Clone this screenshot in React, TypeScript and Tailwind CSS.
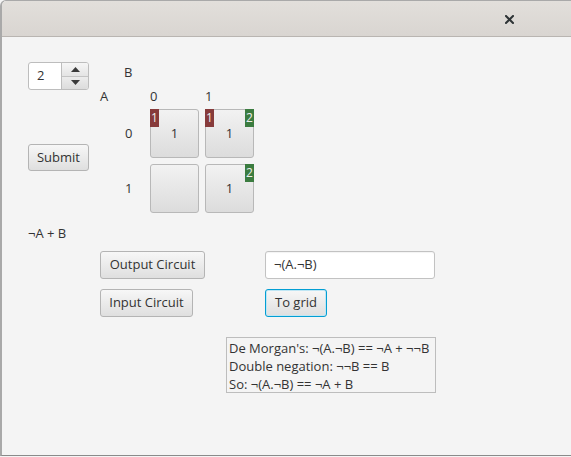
const font = { fontFamily: '"Open Sans", "Noto Sans", sans-serif' };

function Btn({ label, w, focused }: { label: string; w: string; focused?: boolean }) {
  return (
    <div
      className={`${w} flex h-[28px] items-center justify-center rounded-[3px] border bg-gradient-to-b from-[#f7f7f7] to-[#dfdfdf] text-[13px] text-[#333] ${
        focused ? "border-[#039ed3] shadow-[inset_0_0_0_1px_#bfe6f4]" : "border-[#b4b4b4]"
      }`}
    >
      {label}
    </div>
  );
}

function Cell({ value, red, green }: { value?: string; red?: string; green?: string }) {
  return (
    <div className="relative h-[49px] w-[49px] rounded-[3px] border border-[#b8b8b8] bg-gradient-to-b from-[#f2f2f2] to-[#dcdcdc]">
      {red && (
        <span className="absolute -left-px -top-px flex h-[18px] w-[9px] items-center justify-center bg-[#873b3b] text-[12px] leading-none text-[#eee]">
          {red}
        </span>
      )}
      {green && (
        <span className="absolute -right-px -top-px flex h-[18px] w-[9px] items-center justify-center bg-[#3b7c40] text-[12px] leading-none text-[#eee]">
          {green}
        </span>
      )}
      {value && (
        <div className="flex h-full items-center justify-center pt-px text-[13px] text-[#333]">{value}</div>
      )}
    </div>
  );
}

export default function App() {
  return (
    <div style={font} className="h-[457px] w-[571px] overflow-hidden bg-[#f4f4f4]">
      <div className="flex h-[456px] flex-col overflow-hidden rounded-tl-[6px] border-l-2 border-t border-[#a9a9a9] border-b border-b-[#8a8a8a]">
        {/* title bar */}
        <div className="flex h-[36px] shrink-0 items-center justify-end border-b border-[#b9b5b1] bg-gradient-to-b from-[#e2dfdb] to-[#d9d5d1] pr-[57px]">
          <svg width="9" height="9" viewBox="0 0 9 9" className="mt-px">
            <path d="M1 1L8 8M8 1L1 8" stroke="#2e3436" strokeWidth="2" strokeLinecap="square" />
          </svg>
        </div>

        <div className="relative flex-1 pl-[26px] pt-[25px] text-[13px] text-[#333]">
          {/* top block */}
          <div className="flex">
            <div className="w-[72px]">
              <div className="flex h-[28px] w-[61px] overflow-hidden rounded-[3px] border border-[#bdbdbd] bg-white">
                <div className="flex flex-1 items-center pl-[8px] text-[13px]">2</div>
                <div className="flex w-[27px] flex-col border-l border-[#bdbdbd]">
                  <div className="flex flex-1 items-center justify-center border-b border-[#c4c4c4] bg-gradient-to-b from-[#f6f6f6] to-[#e4e4e4]">
                    <svg width="9" height="5" viewBox="0 0 9 5">
                      <path d="M0 5L4.5 0L9 5Z" fill="#3a3a3a" />
                    </svg>
                  </div>
                  <div className="flex flex-1 items-center justify-center bg-gradient-to-b from-[#ececec] to-[#dcdcdc]">
                    <svg width="9" height="5" viewBox="0 0 9 5">
                      <path d="M0 0L4.5 5L9 0Z" fill="#3a3a3a" />
                    </svg>
                  </div>
                </div>
              </div>
              <div className="mt-[54px] flex h-[27px] w-[61px] items-center justify-center rounded-[3px] border border-[#b4b4b4] bg-gradient-to-b from-[#f7f7f7] to-[#dfdfdf]">
                Submit
              </div>
            </div>

            <div className="grid grid-cols-[24px_26px_55px_55px] grid-rows-[22px_25px_55px_49px]">
              <div />
              <div className="flex items-center">B</div>
              <div />
              <div />
              <div className="flex items-center">A</div>
              <div />
              <div className="flex items-center">0</div>
              <div className="flex items-center">1</div>
              <div />
              <div className="flex h-[49px] items-center pl-px">0</div>
              <Cell value="1" red="1" />
              <Cell value="1" red="1" green="2" />
              <div />
              <div className="flex h-[49px] items-center pl-px">1</div>
              <Cell />
              <Cell value="1" green="2" />
            </div>
          </div>

          <div className="mt-[11px] leading-[18px]">¬A + B</div>

          <div className="mt-[9px] flex pl-[72px]">
            <Btn label="Output Circuit" w="w-[105px]" />
            <div className="ml-[60px] flex h-[28px] w-[170px] items-center rounded-[3px] border border-[#c2c2c2] bg-white pl-[8px] shadow-[inset_0_1px_1px_rgba(0,0,0,0.05)]">
              ¬(A.¬B)
            </div>
          </div>

          <div className="mt-[10px] flex pl-[72px]">
            <Btn label="Input Circuit" w="w-[93px]" />
            <div className="ml-[72px]">
              <Btn label="To grid" w="w-[62px]" focused />
            </div>
          </div>

          <div className="ml-[198px] mt-[20px] h-[56px] w-[210px] border border-[#bdbdbd] pl-[2px] pt-px leading-[18px]">
            <div>De Morgan's: ¬(A.¬B) == ¬A + ¬¬B</div>
            <div>Double negation: ¬¬B == B</div>
            <div>So: ¬(A.¬B) == ¬A + B</div>
          </div>
        </div>
      </div>
    </div>
  );
}
